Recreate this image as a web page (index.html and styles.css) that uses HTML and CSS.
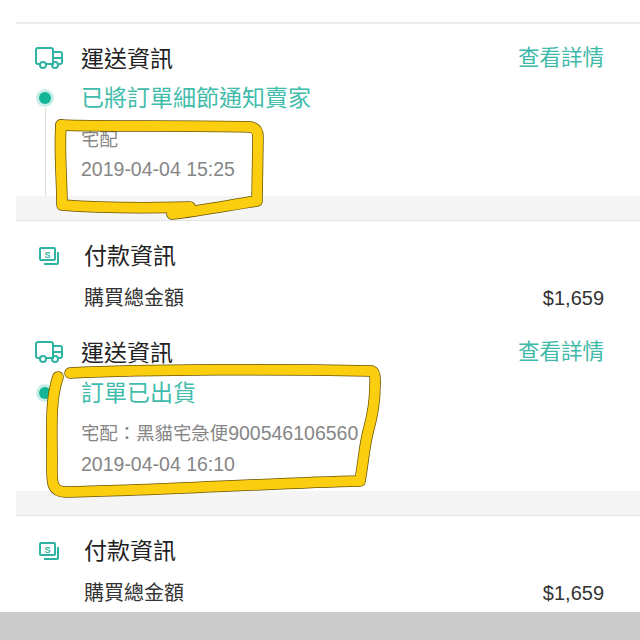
FILE: index.html
```html
<!DOCTYPE html>
<html lang="zh-Hant">
<head>
  <meta charset="UTF-8">
  <title>訂單詳情</title>
  <link rel="stylesheet" href="styles.css">
</head>
<body>
  <div class="page">
    <div class="rule"></div>

    <!-- first shipping block -->
    <section class="ship">
      <div class="row">
        <div class="ship-icon">
          <svg width="28" height="22" viewBox="0 0 28 22" fill="none" stroke="#2fb3a2" stroke-width="2">
            <path d="M5 17H3a2 2 0 0 1-2-2V3a2 2 0 0 1 2-2h13a2 2 0 0 1 2 2v14h-7"/>
            <path d="M18 5h7a2 2 0 0 1 2 2v8a2 2 0 0 1-2 2h-2M18 11h9M18 17h-0"/>
            <circle cx="8" cy="18" r="3"/>
            <circle cx="20" cy="18" r="3"/>
          </svg>
        </div>
        <h2 class="title">運送資訊</h2>
        <a class="more">查看詳情</a>
      </div>
      <div class="track">
        <div class="track-side">
          <span class="dot"></span>
          <span class="track-line"></span>
        </div>
        <div class="track-body">
          <div class="status">已將訂單細節通知賣家</div>
          <div class="note note-first">宅配</div>
          <div class="note"><span class="num">2019-04-04 15:25</span></div>
        </div>
      </div>
    </section>

    <div class="band"></div>

    <section class="pay">
      <div class="row">
        <div class="pay-icon">
          <svg width="20" height="19" viewBox="0 0 20 19" fill="none" stroke="#2fb3a2" stroke-width="2">
            <rect x="1" y="1" width="15" height="12" rx="1"/>
            <path d="M19 5v11a1 1 0 0 1-1 1H5"/>
            <text x="8.5" y="10.5" text-anchor="middle" class="pay-s">S</text>
          </svg>
        </div>
        <h2 class="title">付款資訊</h2>
      </div>
      <div class="total">
        <span>購買總金額</span>
        <span class="amount">$1,659</span>
      </div>
    </section>

    <!-- second shipping block -->
    <section class="ship ship-next">
      <div class="row">
        <div class="ship-icon">
          <svg width="28" height="22" viewBox="0 0 28 22" fill="none" stroke="#2fb3a2" stroke-width="2">
            <path d="M5 17H3a2 2 0 0 1-2-2V3a2 2 0 0 1 2-2h13a2 2 0 0 1 2 2v14h-7"/>
            <path d="M18 5h7a2 2 0 0 1 2 2v8a2 2 0 0 1-2 2h-2M18 11h9M18 17h-0"/>
            <circle cx="8" cy="18" r="3"/>
            <circle cx="20" cy="18" r="3"/>
          </svg>
        </div>
        <h2 class="title">運送資訊</h2>
        <a class="more">查看詳情</a>
      </div>
      <div class="track">
        <div class="track-side">
          <span class="dot"></span>
        </div>
        <div class="track-body">
          <div class="status">訂單已出貨</div>
          <div class="note note-first">宅配：黑貓宅急便<span class="num">900546106560</span></div>
          <div class="note"><span class="num">2019-04-04 16:10</span></div>
        </div>
      </div>
    </section>

    <div class="band"></div>

    <section class="pay">
      <div class="row">
        <div class="pay-icon">
          <svg width="20" height="19" viewBox="0 0 20 19" fill="none" stroke="#2fb3a2" stroke-width="2">
            <rect x="1" y="1" width="15" height="12" rx="1"/>
            <path d="M19 5v11a1 1 0 0 1-1 1H5"/>
            <text x="8.5" y="10.5" text-anchor="middle" class="pay-s">S</text>
          </svg>
        </div>
        <h2 class="title">付款資訊</h2>
      </div>
      <div class="total">
        <span>購買總金額</span>
        <span class="amount">$1,659</span>
      </div>
    </section>
  </div>

  <div class="footer"></div>

  <!-- yellow marker drawn over the screenshot -->
  <svg class="marker" width="640" height="640" viewBox="0 0 640 640" fill="none" stroke-linecap="round" stroke-linejoin="round">
    <g class="marker-edge">
      <path d="M61 125C100 127 190 125 250 127Q258 128 258 137L257 201C230 205 200 211 172 214"/>
      <path d="M61 125C59 150 62 180 62 205C100 208 150 208 190 207"/>
      <path d="M70 373C150 369 280 369 372 371Q376 372 375 385C375 405 372 418 368 432C364 448 363 465 360 481C270 483 150 491 66 492C50 492 52 480 52 460C52 430 50 400 58 377"/>
    </g>
    <g class="marker-fill">
      <path d="M61 125C100 127 190 125 250 127Q258 128 258 137L257 201C230 205 200 211 172 214"/>
      <path d="M61 125C59 150 62 180 62 205C100 208 150 208 190 207"/>
      <path d="M70 373C150 369 280 369 372 371Q376 372 375 385C375 405 372 418 368 432C364 448 363 465 360 481C270 483 150 491 66 492C50 492 52 480 52 460C52 430 50 400 58 377"/>
    </g>
  </svg>
</body>
</html>
```

FILE: styles.css
```css
html, body {
  margin: 0;
  height: 640px;
  overflow: hidden;
  background-color: #ffffff;
}

body {
  position: relative;
  font-family: "Liberation Sans", "Noto Sans CJK TC", sans-serif;
  color: #2a2a2a;
}

.page {
  padding-left: 16px;
  padding-top: 22px;
}

.rule {
  height: 2px;
  background-color: #ececec;
}

.row {
  display: flex;
  align-items: center;
  height: 32px;
}

.title {
  margin: 0;
  font-size: 23px;
  font-weight: 400;
  line-height: 32px;
  color: #222;
}

.ship .title {
  padding-top: 2px;
  line-height: 30px;
}

.more {
  margin-left: auto;
  margin-right: 36px;
  font-size: 21.5px;
  line-height: 32px;
  color: #3fb9a9;
}

.ship {
  padding-top: 18px;
  padding-left: 19px;
}

.ship-next {
  padding-top: 23px;
}

.ship-icon {
  width: 46px;
  display: flex;
}

.track {
  display: flex;
  margin-top: 8px;
}

.ship-next .track {
  margin-top: 9px;
}

.track-side {
  width: 46px;
  display: flex;
  flex-direction: column;
  align-items: flex-start;
}

.dot {
  width: 12px;
  height: 12px;
  margin: 10px 0 0 4px;
  border-radius: 50%;
  background-color: #14b597;
  box-shadow: 0 0 0 3px #c8eee7;
}

.track-line {
  flex: 1;
  width: 1px;
  margin: 4px 0 0 10px;
  background-color: #dedede;
}

.track-body {
  padding-bottom: 11px;
}

.status {
  height: 32px;
  font-size: 23px;
  line-height: 32px;
  color: #41bcac;
}

.note {
  height: 30px;
  font-size: 18.4px;
  line-height: 30px;
  color: #868686;
}

.num {
  font-size: 19.5px;
  line-height: 1;
}

.note-first {
  margin-top: 11px;
}

.ship-next .note-first {
  margin-top: 10px;
}

.ship-next .note + .note {
  margin-top: 1px;
}

.band {
  height: 24px;
  background-color: #f5f5f5;
  border-bottom: 1px solid #e6e6e6;
}

.pay {
  padding-top: 19px;
  padding-left: 23px;
}

.pay-icon {
  width: 45px;
  display: flex;
}

.pay-s {
  font-family: "Liberation Sans", sans-serif;
  font-size: 9px;
  font-weight: 700;
  fill: #2fb3a2;
  stroke: none;
}

.total {
  display: flex;
  justify-content: space-between;
  height: 30px;
  margin-top: 11px;
  margin-left: 45px;
  padding-right: 36px;
  font-size: 20px;
  line-height: 30px;
  color: #333;
}

.footer {
  position: absolute;
  left: 0;
  right: 0;
  bottom: 0;
  height: 28px;
  background-color: #cbcbcb;
}

.marker {
  position: absolute;
  left: 0;
  top: 0;
}

.marker-edge {
  stroke: #6a5200;
  stroke-width: 11.5;
}

.marker-fill {
  stroke: #fbcf10;
  stroke-width: 10;
}
```
